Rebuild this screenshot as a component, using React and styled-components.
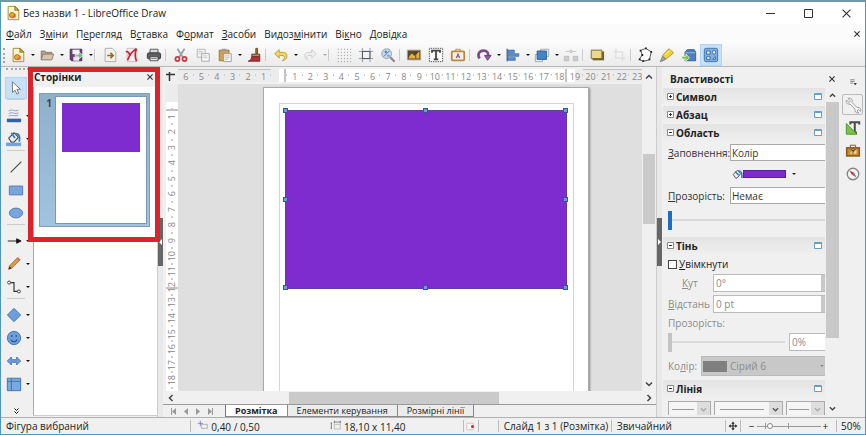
import React, { useState } from "react";
import styled, { createGlobalStyle, css } from "styled-components";

const PURPLE = "#7e2bd0";

const ICONS = {
  logo: (
    <>
      <path d="M3.500 1.500h8l4 4v11h-12z" fill="#fbf3cf" stroke="#a4871f" />
      <path d="M11 1.500l4.500 4.500h-4.500z" fill="#d8a928" stroke="#5c4b12" strokeWidth=".6" />
      <circle cx="8" cy="11.500" r="3" fill="#e7a827" stroke="#a8701a" />
      <path d="M8 13.500l4-4v4.500h-4z" fill="#e2603b" />
    </>
  ),
  open: (
    <>
      <path d="M2.500 14.500v-10h4l1.500 1.500h6.500v3" fill="#b3a28d" stroke="#8b7963" />
      <path d="M2.500 14.500l2-6.500h12l-2 6.500z" fill="#d2c5b1" stroke="#8b7963" />
    </>
  ),
  save: (
    <>
      <path d="M2.500 2.500h13v13h-11.500l-1.500-1.500z" fill="#6b3f7c" stroke="#43254f" />
      <path d="M5 3h8v5h-8z" fill="#f5f5f5" />
      <path d="M6 11h6.500v4.500h-6.500z" fill="#ece6ee" />
      <path d="M8 8.500h4v-3l5 4-5 4v-3h-4z" fill="#63c07a" stroke="#fff" strokeWidth=".8" />
    </>
  ),
  exportPage: (
    <>
      <path d="M3.500 1.500h8l4 4v11h-12z" fill="#f0f0ee" stroke="#a9a9a5" />
      <path d="M6 9.500h7M9.500 6.500l3 3-3 3" fill="none" stroke="#8e6a1a" strokeWidth="1.800" />
    </>
  ),
  pdf: (
    <>
      <path d="M3.500 1.500h11v15h-11z" fill="#f6eeee" stroke="#b9aeae" strokeWidth=".8" />
      <path d="M2 5c3 0 4 2 4 4M14 2c-5 3-8 7-10 13M14 2c-2 5-2 9 0 14" fill="none" stroke="#c22530" strokeWidth="1.800" />
    </>
  ),
  print: (
    <>
      <path d="M4.500 7v-4.500h9v4.500" fill="#d8d8d8" stroke="#555" />
      <rect x="1.500" y="6.500" width="15" height="7" rx="2" fill="#5c6063" stroke="#333" />
      <path d="M4.500 11h9v4.500h-9z" fill="#eee" stroke="#444" />
      <path d="M5.500 13h7" stroke="#777" />
    </>
  ),
  cut: (
    <>
      <path d="M5 2l6.500 10M13 2l-6.500 10" stroke="#9b9fa2" strokeWidth="2" />
      <circle cx="5" cy="13.500" r="2.300" fill="none" stroke="#cc3b41" strokeWidth="2" />
      <circle cx="13" cy="13.500" r="2.300" fill="none" stroke="#cc3b41" strokeWidth="2" />
    </>
  ),
  copy: (
    <>
      <path d="M2.500 2.500h9v9h-9z" fill="#f4f4f4" stroke="#b2b2b2" />
      <path d="M4 5h5M4 7h5" stroke="#c4c4c4" />
      <path d="M7.500 7.500h8.500v8.500h-8.500z" fill="#fafafa" stroke="#a2a2a2" />
      <path d="M9 10h5M9 12h5" stroke="#c4c4c4" />
    </>
  ),
  paste: (
    <>
      <path d="M2.500 3.500h11v12h-11z" fill="#cf9f55" stroke="#9b733a" />
      <path d="M5.500 2h5v3h-5z" fill="#9b9b9b" />
      <path d="M7.500 7.500h8.500v9h-8.500z" fill="#f4f4f4" stroke="#9a9a9a" />
      <path d="M9 10h5M9 12h5M9 14h3" stroke="#c0c0c0" />
    </>
  ),
  brush: (
    <>
      <path d="M11 1.500h2v6h-2z" fill="#9b6a34" stroke="#744d21" />
      <path d="M6.500 8h9v3h-9z" fill="#b98b55" stroke="#5b3c1e" />
      <path d="M6.500 11h9v5h-13c3-1 3.500-2.500 4-5z" fill="#b3313a" stroke="#7b2028" />
    </>
  ),
  undo: (
    <path d="M2 7.500l5-4.500v3h4.500c6 0 5.500 8.500-1 9.500 3-2 3.500-6-.5-6h-3v3z" fill="#f0d568" stroke="#b99a37" />
  ),
  redo: (
    <path d="M16 7.500l-5-4.500v3h-3.500c-6 0-5.500 7.500-1 8.500-2-2-1.500-5 1.500-5h3v3z" fill="#eee" stroke="#ccc" />
  ),
  grid: (
    <path d="M2 2.500h15M2 6h15M2 9.500h15M2 13h15M2 16.500h15" stroke="#888" strokeDasharray="1 2.500" />
  ),
  guides: (
    <>
      <path d="M5 1v16M13.500 1v16M1 5h16M1 13h16" stroke="#8c96a8" />
      <path d="M5 5h8.500v8h-8.500z" fill="none" stroke="#4c4c4c" />
    </>
  ),
  zoom: (
    <>
      <path d="M11.500 11.500l5 5" stroke="#8a8a8a" strokeWidth="2.500" />
      <circle cx="7.500" cy="7.500" r="5.500" fill="#c4daf0" stroke="#999" />
      <path d="M4.500 10.500l6-6M5 5.500h3M6.500 4v3M8 10h3" stroke="#386eb0" fill="none" />
    </>
  ),
  image: (
    <>
      <path d="M1.500 3.500h15v11h-15z" fill="#554b35" stroke="#b3a98f" />
      <path d="M3 12c3-5 4-6 6-2l6-5v8h-12z" fill="#e9b13c" />
      <path d="M11 13v-5l-2-2M11 8l2-2" fill="none" stroke="#40331b" />
    </>
  ),
  text: (
    <>
      <rect x="1.500" y="1.500" width="15" height="15" fill="#fafafa" stroke="#222" strokeDasharray="1 1" />
      <path d="M4.500 6.500v-2.500h9v2.500M9 4v10M6.500 14h5" fill="none" stroke="#444" strokeWidth="2" />
    </>
  ),
  fontwork: (
    <>
      <rect x="2" y="5" width="14" height="10" rx="1" fill="#f6efe5" stroke="#b98b3d" strokeWidth="2" />
      <path d="M6.500 5v-2.500h5v2.500" fill="none" stroke="#b98b3d" />
      <path d="M7 12.500l2-5 2 5M8 11h2" fill="none" stroke="#6d3c7c" />
    </>
  ),
  rotate: (
    <>
      <path d="M4 13c-3-5 0-9 4.500-9 4 0 6 3 5 7" fill="none" stroke="#7c4a8c" strokeWidth="3" />
      <path d="M9.500 9.500h7.500l-4 5.500z" fill="#8f5c9f" stroke="#6a3a7a" />
    </>
  ),
  align: (
    <>
      <path d="M2.500 2v14" stroke="#3b618f" strokeWidth="1.500" />
      <path d="M3.500 3.500h7v3h-7zM3.500 7.500h12v3h-12zM3.500 12h8v3h-8z" fill="#5c93cf" stroke="#3867a0" strokeWidth=".8" />
    </>
  ),
  arrange: (
    <>
      <path d="M7.500 2.500h9v8h-9zM1.500 8.500h8v8h-8z" fill="#eef1f4" stroke="#9aa3ad" />
      <path d="M3.500 4.500h10.500v9.500h-10.500z" fill="#4483c4" stroke="#285e98" />
    </>
  ),
  distribute: (
    <>
      <path d="M1.500 10.500h5v5h-5zM11.500 10.500h5v5h-5z" fill="#ccc" stroke="#bbb" />
      <path d="M3 5h5M10 5h5" stroke="#c6c6c6" />
      <circle cx="9" cy="5" r="1.500" fill="#ddd" stroke="#c0c0c0" />
    </>
  ),
  shadow: (
    <>
      <path d="M4 5h13v10h-13z" fill="#6f6533" />
      <path d="M2.500 3.500h12v9.500h-12z" fill="#ecd888" stroke="#79652a" />
    </>
  ),
  crop: <path d="M5.500 2v10.500h11M2 5.500h11v11" fill="none" stroke="#dedede" strokeWidth="1.500" />,
  points: (
    <>
      <path d="M4 4l6-2.500 6 4-2 9-7 1.500-4.500-2 3.500-5z" fill="#fafafa" stroke="#444" />
      <path d="M3 3h2v2h-2zM9 .5h2v2h-2zM15 4.500h2v2h-2zM13 13h2v2h-2zM6 15h2v2h-2zM2 13h2v2h-2zM5 8h2v2h-2z" fill="#222" />
    </>
  ),
  glue: (
    <>
      <path d="M1.500 16.500l2.500-6 3.500 3.500z" fill="#aaa" stroke="#777" />
      <path d="M4 9.500l7-7.500 5.500 4.500-8.500 7z" fill="#f0d23c" stroke="#ae8e27" />
      <path d="M7 9l5-5" stroke="#fff1a2" />
    </>
  ),
  extrusion: (
    <>
      <path d="M4.500 6l2.500-3h8l1.500 3v9.500h-12z" fill="#4d7fba" stroke="#315b8d" />
      <path d="M5 6.500h11" stroke="#9cbfe4" />
      <path d="M1 10.500h4.500v-2.500l4 4-4 4v-2.500h-4.500z" fill="#7cc142" stroke="#e6f5d9" />
    </>
  ),
  shapes: (
    <>
      <rect x="1.500" y="1.500" width="15" height="15" rx="2" fill="#7dacdf" stroke="#3e74b0" />
      <path d="M4 4.500h4v3.500h-4zM4 11h4v3h-4zM11 14l3-3v3z" fill="#e2eefb" stroke="#376ba6" />
      <circle cx="12.500" cy="6" r="2" fill="#e2eefb" stroke="#376ba6" />
    </>
  ),
  pointer: <path d="M5 2v12l3-2.500 2 4.500 2-1-2-4.500h4z" fill="#fff" stroke="#6f6f6f" />,
  lineStyle: (
    <>
      <path d="M3 3.500c4-3 7 1 11-1M3 6.500c4-3 7 1 11-1M3 9c4-2 7 1 11-1" fill="none" stroke="#7c9ac2" />
      <path d="M1 12h16v4h-16z" fill="#2f62a8" />
    </>
  ),
  fill: (
    <>
      <path d="M3 8l6-6 5 5-5 5.500h-3z" fill="#eee" stroke="#4b4b4b" strokeWidth="1.200" />
      <path d="M6 2l4 6M10 3c5 0 6 3 5 9" fill="none" stroke="#397ebd" strokeWidth="2" />
      <path d="M0 13h17v4h-17z" fill="#70a5da" />
    </>
  ),
  bucket: (
    <>
      <path d="M2 9l7-7 5 6-6 7h-2z" fill="#eee" stroke="#4b4b4b" strokeWidth="1.500" />
      <path d="M5 4l6 6M10 3c5 0 7 4 6 12" fill="none" stroke="#397ebd" strokeWidth="2.500" />
    </>
  ),
  line: <path d="M3 15l12-12" stroke="#444" strokeWidth="1.200" />,
  rect: <path d="M1.500 4.500h15v10h-15z" fill="#7aa5dc" stroke="#4c78b0" />,
  ellipse: <ellipse cx="9" cy="9" rx="7.500" ry="5.500" fill="#7aa5dc" stroke="#4c78b0" />,
  arrow: <path d="M2 9h10M12 6.500l5 2.500-5 2.500z" fill="#111" stroke="#111" />,
  pencil: (
    <>
      <path d="M3 15l1-4 9-9 2.500 2.500-9 9z" fill="#e49c46" stroke="#9f6428" />
      <path d="M12 3l1.500-1.500 3 2.500-1.500 1.500z" fill="#d3706c" />
      <path d="M3 15l1-3.500 2.500 2.500z" fill="#3b3022" />
    </>
  ),
  connector: (
    <>
      <path d="M4.500 4h4.500v10h4" fill="none" stroke="#333" strokeWidth="1.300" />
      <circle cx="3.500" cy="4" r="1.700" fill="#fff" stroke="#333" />
      <circle cx="14.500" cy="14" r="1.700" fill="#fff" stroke="#333" />
    </>
  ),
  diamond: <path d="M9 1.500l7.500 7.500-7.500 7.500-7.500-7.500z" fill="#6c9fda" stroke="#4472ab" />,
  smiley: (
    <>
      <circle cx="9" cy="9" r="7.500" fill="#6c9fda" stroke="#4472ab" />
      <path d="M5.500 11c1.500 3 5.500 3 7 0M6.500 5.500v2.500M11.500 5.500v2.500" fill="none" stroke="#244f86" strokeWidth="1.200" />
    </>
  ),
  doubleArrow: (
    <path d="M1.500 9l4.500-4.500v3h6v-3l4.500 4.500-4.500 4.500v-3h-6v3z" fill="#6c9fda" stroke="#4472ab" />
  ),
  table: (
    <>
      <path d="M1.500 2.500h15v14h-15z" fill="#78aae0" stroke="#3c6ca8" />
      <path d="M1.500 6h15M6 2.500v14" stroke="#3c6ca8" />
    </>
  ),
  wrench: (
    <path d="M2.500 4l2.500 2.500 1.500-1.500-2.500-2.500c3-1 5 1 4 4l5 5c3-.5 4.500 1.500 3.500 4l-2-2-1.500 1.500 2 2c-3 .5-4.500-1.500-4-4l-5-5c-3 .5-4.500-1.500-3.500-4z" fill="#f6f6f6" stroke="#a0a0a0" />
  ),
  styles: (
    <>
      <path d="M6 5v-2.500h10v2.500M11 2.500v12M8.500 14.500h5" fill="none" stroke="#4d4d4d" strokeWidth="2.300" />
      <path d="M1.500 4v12h12z" fill="#79c34b" stroke="#4a8f24" />
    </>
  ),
  gallery: (
    <>
      <path d="M2 5.500h14v9h-14z" fill="#c48c32" stroke="#8e641c" strokeWidth="2" />
      <path d="M6 5v-2.500h6v2.500" fill="none" stroke="#6e5120" />
      <path d="M5 12l3-3 2 1 3-3v5z" fill="#f5d67c" />
      <path d="M9 12v-3l-2-2M9 9l3-2" fill="none" stroke="#4b3a19" />
    </>
  ),
  compass: (
    <>
      <circle cx="9" cy="9" r="6.500" fill="#f4f4f4" stroke="#858585" strokeWidth="1.500" />
      <path d="M5 5l5.500 3-2.500 2z" fill="#c1263a" />
      <path d="M13 13l-5-3 2.500-2z" fill="#777" />
    </>
  ),
  dock: (
    <>
      <path d="M4 5h8M4 8h8M4 11h5" stroke="#777" strokeWidth="1.500" />
      <path d="M10 11h6l-3 4z" fill="#333" />
    </>
  ),
  position: (
    <>
      <path d="M5 1v8M1 5h8" stroke="#5f62a5" />
      <path d="M6.500 6.500h9v6h-9z" fill="none" stroke="#999" />
    </>
  ),
  size: (
    <>
      <path d="M2 4v9M1 4.500h2M1 12.500h2M6 3h10M6.500 1v4M15.500 1v4" stroke="#555" />
      <path d="M6.500 6.500h9v7h-9z" fill="none" stroke="#aaa" />
    </>
  ),
  modified: (
    <>
      <path d="M1.500 2.500h13v13h-13z" fill="#f8f8f8" stroke="#c49090" />
      <circle cx="13" cy="9" r="3" fill="#c8252d" />
    </>
  ),
  fit: (
    <path d="M9 1l3 4h-2v3h3v-2l4 3-4 3v-2h-3v3h2l-3 4-3-4h2v-3h-3v2l-4-3 4-3v2h3v-3h-2z" fill="#222" />
  ),
};

const Icon = ({ name, size = 18 }) => (
  <svg width={size} height={size} viewBox="0 0 18 18" aria-hidden="true">
    {ICONS[name]}
  </svg>
);

const Chevron = ({ dir = "down", size = 8, color = "#444" }) => {
  const d = {
    down: "M1 2.500l3 3 3-3",
    up: "M1 5.500l3-3 3 3",
    left: "M5.500 1l-3 3 3 3",
    right: "M2.500 1l3 3-3 3",
  }[dir];
  return (
    <svg width={size} height={size} viewBox="0 0 8 8" aria-hidden="true">
      <path d={d} fill="none" stroke={color} strokeWidth="1.500" />
    </svg>
  );
};

const Cross = ({ size = 6, weight = 1.5 }) => (
  <svg width={size} height={size} viewBox="0 0 8 8" aria-hidden="true">
    <path d="M.5 .5l7 7M7.500 .5l-7 7" stroke="#333" strokeWidth={weight} />
  </svg>
);

const MENU = [
  ["", "Ф", "айл"],
  ["З", "м", "іни"],
  ["П", "е", "регляд"],
  ["В", "с", "тавка"],
  ["Ф", "о", "рмат"],
  ["", "З", "асоби"],
  ["Видоз", "м", "інити"],
  ["Ві", "к", "но"],
  ["", "Д", "овідка"],
];

const TOOLBAR = [
  { icon: "logo", label: "Створити", menu: true },
  { icon: "open", label: "Відкрити", menu: true },
  { icon: "save", label: "Зберегти", menu: true },
  { gap: 5 },
  { icon: "exportPage", label: "Експорт" },
  { icon: "pdf", label: "Експорт до PDF" },
  { icon: "print", label: "Друк" },
  { gap: 5 },
  { icon: "cut", label: "Вирізати" },
  { icon: "copy", label: "Копіювати" },
  { icon: "paste", label: "Вставити", menu: true },
  { icon: "brush", label: "Копіювати форматування" },
  { gap: 5 },
  { icon: "undo", label: "Скасувати", menu: true },
  { icon: "redo", label: "Повторити", menu: true, off: true },
  { gap: 5 },
  { icon: "grid", label: "Сітка" },
  { icon: "guides", label: "Напрямні" },
  { icon: "zoom", label: "Масштаб" },
  { gap: 4 },
  { icon: "image", label: "Зображення" },
  { icon: "text", label: "Текстове поле" },
  { icon: "fontwork", label: "Fontwork" },
  { gap: 4 },
  { icon: "rotate", label: "Перетворення", menu: true },
  { icon: "align", label: "Вирівнювання", menu: true },
  { icon: "arrange", label: "Розташувати", menu: true },
  { icon: "distribute", label: "Розподілити", off: true },
  { gap: 4 },
  { icon: "shadow", label: "Тінь" },
  { icon: "crop", label: "Обрізати", off: true },
  { gap: 4 },
  { icon: "points", label: "Точки" },
  { icon: "glue", label: "Точки з'єднання" },
  { icon: "extrusion", label: "Видавлювання" },
  { icon: "shapes", label: "Функції малювання", active: true },
];

const TOOLS = [
  { icon: "pointer", label: "Вибір", active: true },
  null,
  { icon: "lineStyle", label: "Колір лінії", menu: true },
  { icon: "fill", label: "Колір заповнення", menu: true },
  null,
  { icon: "line", label: "Лінія" },
  { icon: "rect", label: "Прямокутник" },
  { icon: "ellipse", label: "Еліпс" },
  null,
  { icon: "arrow", label: "Лінії та стрілки", menu: true },
  { icon: "pencil", label: "Криві", menu: true },
  { icon: "connector", label: "З'єднувачі", menu: true },
  null,
  { icon: "diamond", label: "Основні фігури", menu: true },
  { icon: "smiley", label: "Фігури-символи", menu: true },
  { icon: "doubleArrow", label: "Блочні стрілки", menu: true },
  { icon: "table", label: "Блок-схема", menu: true },
];

const H_TICKS = Array.from({ length: 30 }, (_, i) => i - 6);
const V_TICKS = Array.from({ length: 19 }, (_, i) => i);
const TABS = ["Розмітка", "Елементи керування", "Розмірні лінії"];
const HANDLES = [[0, 0], [50, 0], [100, 0], [0, 50], [100, 50], [0, 100], [50, 100], [100, 100]];

function Section({ title, open }) {
  return (
    <SectionHead>
      <Expander aria-label={title} aria-expanded={!!open}>
        <svg width="7" height="7" viewBox="0 0 7 7" aria-hidden="true">
          <path d="M.5 .5h6v6h-6z" fill="#fff" stroke="#888" />
          <path d={open ? "M2 3.500h3" : "M2 3.500h3M3.500 2v3"} stroke="#333" />
        </svg>
      </Expander>
      <h3>{title}</h3>
      <Expander aria-label="Більше параметрів">
        <svg width="8" height="7" viewBox="0 0 8 7" aria-hidden="true">
          <path d="M.5 .5h7v6h-7z" fill="#fff" stroke="#6c9cc0" />
          <path d="M1 1.500h6" stroke="#6c9cc0" />
        </svg>
      </Expander>
    </SectionHead>
  );
}

function App() {
  const [tab, setTab] = useState(0);

  return (
    <Window>
      <GlobalStyle />
      <TitleBar>
        <Icon name="logo" size={16} />
        <h1>Без назви 1 - LibreOffice Draw</h1>
        <WindowButton aria-label="Згорнути">
          <svg width="9" height="9" viewBox="0 0 9 9"><path d="M0 4.500h9" stroke="#333" /></svg>
        </WindowButton>
        <WindowButton aria-label="Розгорнути">
          <svg width="9" height="9" viewBox="0 0 9 9"><path d="M.5 .5h8v8h-8z" fill="none" stroke="#333" /></svg>
        </WindowButton>
        <WindowButton aria-label="Закрити">
          <Cross size={9} weight={1} />
        </WindowButton>
      </TitleBar>

      <MenuBar>
        {MENU.map(([before, key, after]) => (
          <MenuItem key={before + key + after}>
            {before}<u>{key}</u>{after}
          </MenuItem>
        ))}
        <CloseDoc aria-label="Закрити документ"><Cross /></CloseDoc>
      </MenuBar>

      <Toolbar>
        <Grip />
        {TOOLBAR.map((item, i) =>
          item.gap ? (
            <Divider key={i} $width={item.gap} />
          ) : (
            <React.Fragment key={i}>
              <ToolButton aria-label={item.label} $active={item.active}>
                <Icon name={item.icon} size={16} />
              </ToolButton>
              {item.menu && <Drop aria-label={`${item.label}: меню`} $off={item.off} />}
            </React.Fragment>
          )
        )}
      </Toolbar>

      <Body>
        <ToolColumn>
          <ColumnGrip />
          {TOOLS.map((item, i) =>
            item ? (
              <ToolRow key={item.icon} $menu={item.menu}>
                <ToolButton aria-label={item.label} $active={item.active}>
                  <Icon name={item.icon} size={16} />
                </ToolButton>
                {item.menu && <Drop aria-label={`${item.label}: меню`} />}
              </ToolRow>
            ) : (
              <RowDivider key={i} />
            )
          )}
          <MoreTools aria-label="Більше">
            <svg width="5" height="7" viewBox="0 0 5 7" aria-hidden="true">
              <path d="M.5 .5l2 2 2-2M.5 3.500l2 2 2-2" fill="none" stroke="#111" />
            </svg>
          </MoreTools>
        </ToolColumn>

        <PagesPanel>
          <PanelHead>
            <h2>Сторінки</h2>
            <PlainButton aria-label="Закрити панель"><Cross /></PlainButton>
          </PanelHead>
          <PageList>
            <PageCard>
              <span>1</span>
              <Thumb><ThumbShape /></Thumb>
            </PageCard>
          </PageList>
          <Marker />
        </PagesPanel>

        <Splitter>
          <SplitHandle aria-label="Сховати сторінки"><Triangle $left /></SplitHandle>
        </Splitter>

        <Editor>
          <EditorGrid>
            <Corner>
              <svg width="9" height="9" viewBox="0 0 9 9"><path d="M0 2.500h9M3.500 0v9" stroke="#333" strokeWidth="1.500" /></svg>
            </Corner>
            <HRuler>
              <HScale>
                {H_TICKS.map((n) => (
                  <HCell key={n} $n={n}>{n !== 0 && Math.abs(n)}</HCell>
                ))}
              </HScale>
              <HMark $at={106} />
              <HMark $at={387} />
            </HRuler>
            <VRuler>
              <VScale>
                {V_TICKS.map((n) => (
                  <VCell key={n}><span>{n > 0 && n}</span></VCell>
                ))}
              </VScale>
              <VMark $at={25} />
              <VMark $at={203} />
            </VRuler>
            <Workspace>
              <Sheet>
                <Margins />
                <Shape>
                  {HANDLES.map(([x, y]) => (
                    <Handle key={`${x}-${y}`} $x={x} $y={y} />
                  ))}
                </Shape>
              </Sheet>
            </Workspace>
            <VScroll>
              <PlainButton aria-label="Вгору"><Chevron dir="up" /></PlainButton>
              <VTrack><VThumb /></VTrack>
              <PlainButton aria-label="Вниз"><Chevron /></PlainButton>
            </VScroll>
          </EditorGrid>
          <HScroll>
            <PlainButton aria-label="Ліворуч"><Chevron dir="left" /></PlainButton>
            <HTrack><HThumb /></HTrack>
            <PlainButton aria-label="Праворуч"><Chevron dir="right" /></PlainButton>
          </HScroll>
          <TabBar>
            <TabNav>
              {["Перша", "Попередня", "Наступна", "Остання"].map((label, i) => (
                <PlainButton key={label} aria-label={label}>
                  <svg width="6" height="7" viewBox="0 0 6 7">
                    <path d={i < 2 ? "M5 0v7l-4-3.500z" : "M1 0v7l4-3.500z"} fill="#999" />
                    {i === 0 && <path d="M.5 0v7" stroke="#999" />}
                    {i === 3 && <path d="M5.500 0v7" stroke="#999" />}
                  </svg>
                </PlainButton>
              ))}
            </TabNav>
            <Tabs role="tablist">
              {TABS.map((name, i) => (
                <Tab key={name} role="tab" aria-selected={tab === i} $active={tab === i} onClick={() => setTab(i)}>
                  {name}
                </Tab>
              ))}
            </Tabs>
          </TabBar>
        </Editor>

        <Splitter>
          <SplitHandle aria-label="Сховати властивості"><Triangle /></SplitHandle>
        </Splitter>

        <Properties>
          <PropHead>
            <h2>Властивості</h2>
            <PlainButton aria-label="Закрити властивості"><Cross /></PlainButton>
          </PropHead>
          <PropBody>
            <PropContent>
              <Section title="Символ" />
              <Section title="Абзац" />
              <Section title="Область" open />
              <Fields>
                <Field>
                  <label htmlFor="fill"><u>З</u>аповнення:</label>
                  <Select id="fill" defaultValue="color"><option value="color">Колір</option></Select>
                </Field>
                <ColorButton aria-label="Колір заповнення">
                  <Icon name="bucket" size={11} />
                  <Swatch />
                  <Caret />
                </ColorButton>
                <Field>
                  <label htmlFor="trans"><u>П</u>розорість:</label>
                  <Select id="trans" defaultValue="none"><option value="none">Немає</option></Select>
                </Field>
                <Range type="range" aria-label="Прозорість" defaultValue="0" $thumb="#1a6fc0" $height={26} />
              </Fields>
              <Section title="Тінь" open />
              <Fields>
                <Check>
                  <input type="checkbox" id="shadow" />
                  <label htmlFor="shadow"><u>У</u>вімкнути</label>
                </Check>
                <Field $narrow $off>
                  <IndentLabel htmlFor="angle"><u>К</u>ут</IndentLabel>
                  <Spin><input id="angle" defaultValue="0°" disabled /><i /></Spin>
                </Field>
                <Field $narrow $off>
                  <label htmlFor="dist"><u>В</u>ідстань</label>
                  <Spin><input id="dist" defaultValue="0 pt" disabled /><i /></Spin>
                </Field>
                <OffLabel htmlFor="shadow-trans">Прозорість:</OffLabel>
                <SliderRow>
                  <Range type="range" id="shadow-trans" defaultValue="0" disabled $thumb="#c4c4c4" $height={18} />
                  <Spin><input aria-label="Прозорість, %" defaultValue="0%" disabled /></Spin>
                </SliderRow>
                <ColorField>
                  <label htmlFor="shadow-color">Ко<u>л</u>ір:</label>
                  <ColorSelect>
                    <span />
                    <select id="shadow-color" disabled><option>Сірий 6</option></select>
                    <Caret $off />
                  </ColorSelect>
                </ColorField>
              </Fields>
              <Section title="Лінія" open />
              <LineRow>
                {["Початок лінії", "Стиль лінії", "Кінець лінії"].map((label, i) => (
                  <LineSelect key={label}>
                    <select aria-label={label} disabled={i !== 1} />
                    <hr />
                    <b><Chevron size={7} color={i === 1 ? "#555" : "#aaa"} /></b>
                  </LineSelect>
                ))}
              </LineRow>
            </PropContent>
            <PropScroll>
              <PlainButton aria-label="Вгору"><Chevron dir="up" size={7} /></PlainButton>
              <PropTrack />
              <PlainButton aria-label="Вниз"><Chevron size={7} /></PlainButton>
            </PropScroll>
          </PropBody>
        </Properties>

        <Decks>
          <DeckMenu aria-label="Параметри панелі"><Icon name="dock" size={10} /></DeckMenu>
          <DeckButton aria-label="Властивості" $active><Icon name="wrench" /></DeckButton>
          <DeckButton aria-label="Стилі"><Icon name="styles" size={16} /></DeckButton>
          <DeckButton aria-label="Галерея"><Icon name="gallery" size={16} /></DeckButton>
          <DeckButton aria-label="Навігатор"><Icon name="compass" size={16} /></DeckButton>
        </Decks>
      </Body>

      <StatusBar>
        <StatusCell>Фігура вибраний</StatusCell>
        <StatusSplit>
          <span><Icon name="position" size={12} />0,40 / 0,50</span>
          <span><Icon name="size" size={12} />18,10 x 11,40</span>
        </StatusSplit>
        <StatusCell $center><Icon name="modified" size={9} /></StatusCell>
        <StatusCell />
        <StatusCell>Слайд 1 з 1 (Розмітка)</StatusCell>
        <StatusCell>Звичайний</StatusCell>
        <StatusCell $center><Icon name="fit" size={10} /></StatusCell>
        <ZoomCell>
          <PlainButton aria-label="Зменшити">−</PlainButton>
          <ZoomRange type="range" aria-label="Масштаб" defaultValue="18" />
          <PlainButton aria-label="Збільшити">+</PlainButton>
        </ZoomCell>
        <StatusCell>50%</StatusCell>
      </StatusBar>
    </Window>
  );
}

const GlobalStyle = createGlobalStyle`
  * {
    box-sizing: border-box;
  }
  body {
    margin: 0;
    font-family: "Open Sans", "Noto Sans", sans-serif;
    font-size: 10px;
    color: #222;
  }
  h1, h2, h3 {
    margin: 0;
    font-size: inherit;
  }
  button, input, select {
    font: inherit;
    color: inherit;
    margin: 0;
    padding: 0;
    border: 0;
    background: none;
  }
  svg {
    display: block;
    flex: none;
  }
  u {
    text-decoration-thickness: 1px;
    text-underline-offset: 1px;
  }
`;

const Window = styled.div`
  display: flex;
  flex-direction: column;
  height: 100vh;
  border: 1px solid #4f95c6;
  border-top: 2px solid #7397a6;
  background: #f0f0f0;
`;

const PlainButton = styled.button`
  display: flex;
  align-items: center;
  justify-content: center;
`;

const TitleBar = styled.header`
  display: flex;
  align-items: center;
  height: 22px;
  padding-left: 4px;
  background: #fff;

  h1 {
    flex: 1;
    margin-left: 2px;
    font-weight: 400;
  }
`;

const WindowButton = styled(PlainButton)`
  width: 38px;
  height: 22px;
`;

const MenuBar = styled.nav`
  display: flex;
  align-items: center;
  gap: 8px;
  height: 20px;
  padding: 0 5px;
  background: #fbfbfb;
`;

const MenuItem = styled.button`
  line-height: 18px;
`;

const CloseDoc = styled(PlainButton)`
  margin-left: auto;
`;

const Toolbar = styled.div`
  display: flex;
  align-items: center;
  height: 23px;
  padding-left: 2px;
  border-bottom: 1px solid #b8b8b8;
  background: linear-gradient(#fafafa, #ebebeb);
`;

const Grip = styled.div`
  width: 4px;
  height: 15px;
  border-left: 2px dotted #a5a5a5;
`;

const Divider = styled.div`
  width: ${(p) => p.$width}px;
  height: 12px;
  border-left: 1px solid #ccc;
`;

const ToolButton = styled.button`
  display: flex;
  flex: none;
  align-items: center;
  justify-content: center;
  width: 22px;
  height: 22px;
  ${(p) =>
    p.$active &&
    css`
      background: #c6e0f5;
      border: 1px solid #b2d4ee;
    `}
`;

const Drop = styled.button`
  width: 7px;
  height: 14px;
  display: flex;
  align-items: center;
  justify-content: center;

  &::after {
    content: "";
    border: 2px solid transparent;
    border-top-color: ${(p) => (p.$off ? "#aaa" : "#111")};
    border-bottom: 0;
  }
`;

const Body = styled.main`
  display: flex;
  flex: 1;
  min-height: 0;
`;

const ToolColumn = styled.aside`
  display: flex;
  flex-direction: column;
  width: 32px;
  padding: 0 2px;
`;

const ColumnGrip = styled.div`
  height: 8px;
  margin: 1px 2px 0 3px;
  border-top: 2px dotted #a5a5a5;
`;

const ToolRow = styled.div`
  display: flex;
  align-items: center;
  justify-content: space-between;
  height: 23px;
  padding-left: ${(p) => (p.$menu ? 0 : 2)}px;
`;

const RowDivider = styled.div`
  height: 5px;
  margin: 0 6px 0 4px;
  border-top: 1px solid #ccc;
`;

const MoreTools = styled.button`
  display: flex;
  justify-content: center;
  width: 26px;
  margin-top: auto;
  padding-bottom: 2px;
`;

const PagesPanel = styled.section`
  position: relative;
  display: flex;
  flex-direction: column;
  width: 124px;
`;

const PanelHead = styled.div`
  display: flex;
  align-items: center;
  justify-content: space-between;
  height: 20px;
  padding: 0 4px 0 1px;
`;

const PageList = styled.div`
  flex: 1;
  margin-bottom: 1px;
  padding: 6px 5px;
  border-left: 1px solid #aaa;
  border-bottom: 1px solid #ccc;
  background: #fff;
`;

const PageCard = styled.button`
  display: flex;
  justify-content: flex-end;
  align-items: flex-start;
  gap: 3px;
  width: 111px;
  padding: 2px;
  border: 1px solid #7e9fb8;
  background: linear-gradient(#8fb0ca, #a0c4df);
  font-weight: 700;
  color: #444;
`;

const Thumb = styled.div`
  width: 92px;
  height: 128px;
  padding: 6px;
  border: 1px solid #7a98ae;
  background: #fff;
`;

const ThumbShape = styled.div`
  height: 49px;
  background: ${PURPLE};
`;

const Marker = styled.div`
  position: absolute;
  inset: 0 -3px auto -5px;
  height: 175px;
  border: 5px solid #dc222b;
  pointer-events: none;
`;

const Splitter = styled.div`
  display: flex;
  align-items: center;
  width: 6px;
  border-left: 1px solid #ccc;
  background: #e9e9e9;
`;

const SplitHandle = styled.button`
  display: flex;
  align-items: center;
  justify-content: center;
  width: 5px;
  height: 48px;
  background: #666;
`;

const Triangle = styled.span`
  border: 3px solid transparent;
  border-width: 3px 0;
  ${(p) => (p.$left ? "border-right" : "border-left")}: 3px solid #fff;
`;

const Editor = styled.section`
  display: flex;
  flex: 1;
  flex-direction: column;
  min-width: 0;
  padding-top: 2px;
`;

const EditorGrid = styled.div`
  display: grid;
  flex: 1;
  grid-template-columns: 15px 1fr 14px;
  grid-template-rows: 15px 1fr;
  min-height: 0;
`;

const Corner = styled.div`
  display: grid;
  place-items: center;
`;

const HRuler = styled.div`
  position: relative;
  height: 13px;
  overflow: hidden;
  color: #888;
  font-size: 9px;
`;

const HScale = styled.div`
  display: grid;
  grid-template-columns: repeat(30, 1fr);
  height: 100%;
  margin-right: -3px;
`;

const outside = "#ececec";

const HCell = styled.div`
  display: flex;
  align-items: center;
  justify-content: center;
  position: relative;
  background: ${(p) => {
    if (p.$n === 0) return `linear-gradient(90deg, ${outside} 50%, #fff 50%)`;
    if (p.$n === 19) return `linear-gradient(90deg, #fff 50%, ${outside} 50%)`;
    return p.$n < 0 || p.$n > 19 ? outside : "#fff";
  }};
  border: 1px solid ${(p) => (p.$n < 0 || p.$n > 19 ? "#c0c0c0" : "transparent")};
  border-width: 1px 0;

  &::after {
    content: "";
    position: absolute;
    right: -1px;
    top: 4px;
    width: 2px;
    height: 2px;
    background: #ccc;
  }
`;

const HMark = styled.i`
  position: absolute;
  left: ${(p) => p.$at}px;
  top: 0;
  width: 2px;
  height: 13px;
  background: #c4c4c4;
`;

const VRuler = styled.div`
  position: relative;
  display: flex;
  width: 12px;
  margin-left: 3px;
  overflow: hidden;
  padding: 9px 0 3px;
  background: linear-gradient(${outside} 18px, #fff 18px);
  color: #888;
  font-size: 9px;
`;

const VScale = styled.div`
  display: grid;
  flex: 1;
  grid-template-rows: repeat(19, 1fr);
`;

const VCell = styled.div`
  display: grid;
  place-items: center;
  position: relative;
  min-height: 0;

  span {
    writing-mode: vertical-rl;
    transform: rotate(180deg);
    line-height: 12px;
  }

  &::after {
    content: "";
    position: absolute;
    bottom: -1px;
    left: 5px;
    width: 2px;
    height: 2px;
    background: #ccc;
  }
`;

const VMark = styled.i`
  position: absolute;
  top: ${(p) => p.$at}px;
  left: 0;
  width: 12px;
  height: 2px;
  background: #c4c4c4;
`;

const Workspace = styled.div`
  position: relative;
  overflow: hidden;
  background: #dfdfdf;
`;

const Sheet = styled.div`
  position: absolute;
  left: 85px;
  top: 3px;
  width: 326px;
  height: 460px;
  border: 1px solid #aaa;
  box-shadow: 1px 1px 2px #888;
  background: #fff;
`;

const Margins = styled.div`
  position: absolute;
  inset: 15px 14px 15px 15px;
  border: 1px solid #d5d5d5;
`;

const Shape = styled.div`
  position: absolute;
  left: 21px;
  top: 22px;
  width: 282px;
  height: 179px;
  border: 1px solid #5b3f9e;
  background: ${PURPLE};
`;

const Handle = styled.i`
  position: absolute;
  left: ${(p) => p.$x}%;
  top: ${(p) => p.$y}%;
  width: 5px;
  height: 5px;
  margin: -3px;
  border: 1px solid #34578c;
  background: #6f9bd0;
`;

const VScroll = styled.div`
  display: flex;
  flex-direction: column;
  grid-column: 3;
  grid-row: 1 / 3;
  background: #f0f0f0;

  button {
    height: 15px;
  }
`;

const VTrack = styled.div`
  flex: 1;
  padding: 70px 1px 0;
`;

const VThumb = styled.div`
  height: 70px;
  background: #cacaca;
`;

const HScroll = styled.div`
  display: flex;
  height: 13px;
  background: #f0f0f0;

  button {
    width: 15px;
  }
`;

const HTrack = styled.div`
  flex: 1;
  padding: 1px 0 0 111px;
  margin-right: 13px;
`;

const HThumb = styled.div`
  width: 62%;
  height: 12px;
  background: #cacaca;
`;

const TabBar = styled.div`
  display: flex;
  height: 13px;
  border-top: 1px solid #999;
`;

const TabNav = styled.div`
  display: flex;
  gap: 6px;
  width: 62px;
  padding-left: 8px;
`;

const Tabs = styled.div`
  display: flex;
  border-left: 1px solid #777;
`;

const Tab = styled.button`
  padding: 0 9px;
  border-right: 1px solid #888;
  border-bottom: 1px solid #888;
  background: ${(p) => (p.$active ? "#fff" : "#ececec")};
  font-size: 9px;
  font-weight: ${(p) => (p.$active ? 700 : 400)};
  line-height: 11px;
`;

const Properties = styled.aside`
  display: flex;
  flex-direction: column;
  width: 178px;
  padding: 2px 1px 2px;
`;

const PropHead = styled.div`
  display: flex;
  align-items: center;
  justify-content: space-between;
  height: 19px;
  padding: 0 4px 0 7px;
`;

const PropBody = styled.div`
  display: flex;
  flex: 1;
  min-height: 0;
`;

const PropContent = styled.div`
  flex: 1;
  min-width: 0;
  overflow: hidden;
`;

const SectionHead = styled.div`
  display: flex;
  align-items: center;
  height: 18px;
  padding: 0 3px 0 4px;
  background: linear-gradient(#e3e3e3, #f0f0f0);

  h3 {
    flex: 1;
    margin-left: 2px;
    font-weight: 700;
  }
`;

const Expander = styled.button`
  padding-bottom: 2px;
`;

const Fields = styled.div`
  display: flex;
  flex-direction: column;
  gap: 3px;
  padding: 2px 0 4px 5px;
`;

const Field = styled.div`
  display: grid;
  grid-template-columns: ${(p) => (p.$narrow ? 45 : 62)}px 1fr;
  align-items: center;
  color: ${(p) => (p.$off ? "#8c8c8c" : "#333")};
`;

const IndentLabel = styled.label`
  padding-left: 14px;
`;

const Select = styled.select`
  appearance: none;
  height: 17px;
  padding-left: 1px;
  border: 1px solid #aaa;
  border-right: 0;
  background: #fff;
`;

const ColorButton = styled.button`
  display: flex;
  align-items: center;
  height: 20px;
  margin-left: 64px;
`;

const Swatch = styled.span`
  width: 43px;
  height: 8px;
  border: 1px solid #5b1f9a;
  background: ${PURPLE};
`;

const Caret = styled.i`
  margin-left: 6px;
  border: 2px solid transparent;
  border-top-color: ${(p) => (p.$off ? "#888" : "#222")};
  border-bottom: 0;
`;

const Range = styled.input`
  appearance: none;
  width: 100%;
  min-width: 0;
  height: ${(p) => p.$height}px;
  background: linear-gradient(#d9d9d9, #d9d9d9) center / 100% 2px no-repeat;

  &::-webkit-slider-thumb {
    appearance: none;
    width: 4px;
    height: 19px;
    background: ${(p) => p.$thumb};
  }
`;

const Check = styled.div`
  display: flex;
  align-items: center;
  gap: 2px;
  height: 14px;

  input {
    appearance: none;
    width: 9px;
    height: 9px;
    border: 1px solid #444;
    background: #fff;
  }
`;

const Spin = styled.div`
  display: flex;
  height: 18px;
  min-width: 0;
  border: 1px solid #bbb;
  border-right: 0;
  background: #fff;

  input {
    flex: 1;
    min-width: 0;
    padding-left: 2px;
    color: #8c8c8c;
  }

  i {
    width: 4px;
    background: #c8c8c8;
  }
`;

const OffLabel = styled.label`
  color: #8c8c8c;
  line-height: 14px;
`;

const SliderRow = styled.div`
  display: grid;
  grid-template-columns: 1fr 36px;
  align-items: center;
  gap: 4px;
  height: 18px;
`;

const ColorField = styled.div`
  display: grid;
  grid-template-columns: 33px 1fr;
  align-items: center;
  margin-top: 2px;
  color: #8c8c8c;
`;

const ColorSelect = styled.div`
  display: flex;
  align-items: center;
  height: 20px;
  padding: 0 1px;
  border: 1px solid #bbb;
  border-right: 0;
  background: #c8c8c8;

  span {
    width: 24px;
    height: 11px;
    background: #808080;
  }

  select {
    appearance: none;
    flex: 1;
    min-width: 0;
    padding-left: 3px;
    opacity: 1;
  }
`;

const LineRow = styled.div`
  display: grid;
  grid-template-columns: 43px 69px 1fr;
  gap: 3px;
  padding: 3px 0 0 5px;
`;

const LineSelect = styled.div`
  display: grid;
  grid-template-columns: 1fr 13px;
  align-items: center;
  height: 17px;
  border: 1px solid #aaa;
  background: #f5f5f5;

  select {
    appearance: none;
    grid-area: 1 / 1 / 2 / 3;
    width: 100%;
    height: 15px;
  }

  hr {
    grid-area: 1 / 1;
    width: 80%;
    margin: 0 auto;
    border: 0;
    border-top: 1px solid #999;
    pointer-events: none;
  }

  b {
    display: grid;
    grid-area: 1 / 2;
    place-items: center;
    height: 15px;
    background: #ddd;
    pointer-events: none;
  }
`;

const PropScroll = styled.div`
  display: flex;
  flex-direction: column;
  width: 14px;

  button {
    height: 14px;
  }
`;

const PropTrack = styled.div`
  flex: 1;
  margin-left: 1px;
  background: linear-gradient(#c9c9c9, #c9c9c9) top / 100% 79% no-repeat;
`;

const Decks = styled.nav`
  display: flex;
  flex-direction: column;
  align-items: center;
  gap: 2px;
  width: 25px;
  padding-top: 5px;
`;

const DeckMenu = styled(PlainButton)`
  height: 20px;
`;

const DeckButton = styled.button`
  display: flex;
  align-items: center;
  justify-content: center;
  width: 21px;
  height: 21px;
  border: 1px solid ${(p) => (p.$active ? "#bbb" : "transparent")};
  border-radius: 2px;
`;

const StatusBar = styled.footer`
  display: grid;
  grid-template-columns: 190fr 272fr 15px 20px 113px 114fr 15px 96px 28px;
  align-items: center;
  height: 17px;
  border-top: 1px solid #b0b0b0;
`;

const StatusCell = styled.div`
  display: flex;
  align-items: center;
  justify-content: ${(p) => (p.$center ? "center" : "flex-start")};
  height: 12px;
  padding-left: ${(p) => (p.$center ? 0 : 5)}px;
  border-right: 1px solid #bbb;
  white-space: nowrap;

  &:last-child {
    padding-left: 4px;
    border: 0;
  }
`;

const StatusSplit = styled(StatusCell)`
  display: grid;
  grid-template-columns: 1fr 1fr;
  padding-left: 6px;

  span {
    display: flex;
    gap: 2px;
  }
`;

const ZoomCell = styled(StatusCell)`
  gap: 2px;
  justify-content: center;
  padding: 0;
`;

const ZoomRange = styled.input`
  appearance: none;
  width: 64px;
  height: 10px;
  background:
    linear-gradient(#999, #999) 14% 50% / 1px 6px no-repeat,
    linear-gradient(#999, #999) 50% 50% / 1px 6px no-repeat,
    linear-gradient(#999, #999) center / 100% 1px no-repeat;

  &::-webkit-slider-thumb {
    appearance: none;
    width: 6px;
    height: 6px;
    border: 1px solid #888;
    border-radius: 50%;
    background: #fff;
  }
`;

export default App;
